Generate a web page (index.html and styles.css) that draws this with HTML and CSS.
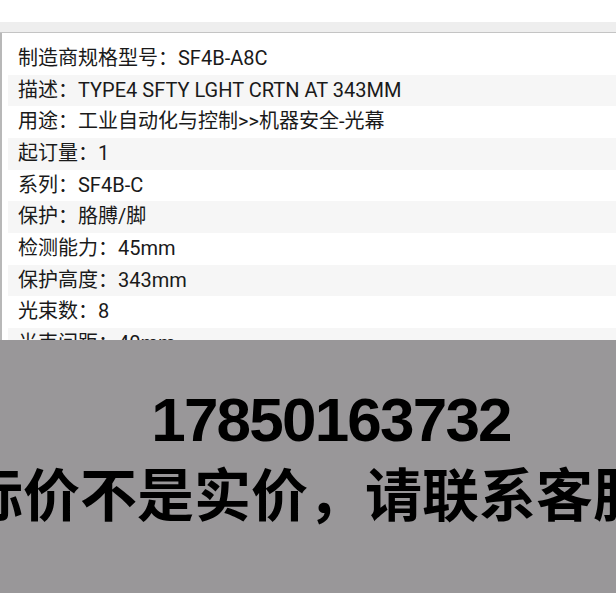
FILE: index.html
```html
<!DOCTYPE html>
<html lang="zh">
<head>
<meta charset="utf-8">
<link rel="stylesheet" href="styles.css">
</head>
<body>
<div class="topbar"></div>
<div class="band"></div>
<div class="card">
  <div class="row">制造商规格型号：SF4B-A8C</div>
  <div class="row alt">描述：TYPE4 SFTY LGHT CRTN AT 343MM</div>
  <div class="row">用途：工业自动化与控制&gt;&gt;机器安全-光幕</div>
  <div class="row alt">起订量：1</div>
  <div class="row">系列：SF4B-C</div>
  <div class="row alt">保护：胳膊/脚</div>
  <div class="row">检测能力：45mm</div>
  <div class="row alt">保护高度：343mm</div>
  <div class="row">光束数：8</div>
  <div class="row alt">光束间距：40mm</div>
</div>
<div class="notice">
  <div class="phone">17850163732</div>
  <div class="warn">标价不是实价，请联系客服</div>
</div>
</body>
</html>
```
FILE: styles.css
```css
html, body {
  margin: 0;
  padding: 0;
  background: #ffffff;
  width: 616px;
  height: 616px;
  overflow: hidden;
}
.topbar {
  height: 22px;
  background: #ffffff;
}
.band {
  height: 10px;
  background: #eeeeee;
  border-bottom: 1px solid #c4c4c4;
}
.card {
  height: 297px;
  overflow: hidden;
  border-left: 2px solid #b8b8b8;
  padding: 10px 0 0 6px;
  font-family: Roboto, "Noto Sans CJK SC", sans-serif;
  font-size: 20px;
  color: #1a1a1a;
}
.row {
  height: 31.67px;
  line-height: 31.67px;
  padding-left: 10px;
  white-space: nowrap;
}
.row.alt {
  background: #f6f6f6;
}
.notice {
  height: 253px;
  background: #999799;
  overflow: hidden;
  display: flex;
  flex-direction: column;
  align-items: center;
  color: #000;
}
.phone {
  margin-top: 45px;
  padding-left: 46px;
  font-family: "Liberation Sans", Arial, sans-serif;
  font-weight: bold;
  font-size: 62px;
  letter-spacing: -1.8px;
  line-height: 70px;
}
.warn {
  margin-top: -4px;
  font-family: "Noto Sans CJK SC", sans-serif;
  font-weight: bold;
  font-size: 57px;
  line-height: 80px;
  white-space: nowrap;
  flex-shrink: 0;
}
```
